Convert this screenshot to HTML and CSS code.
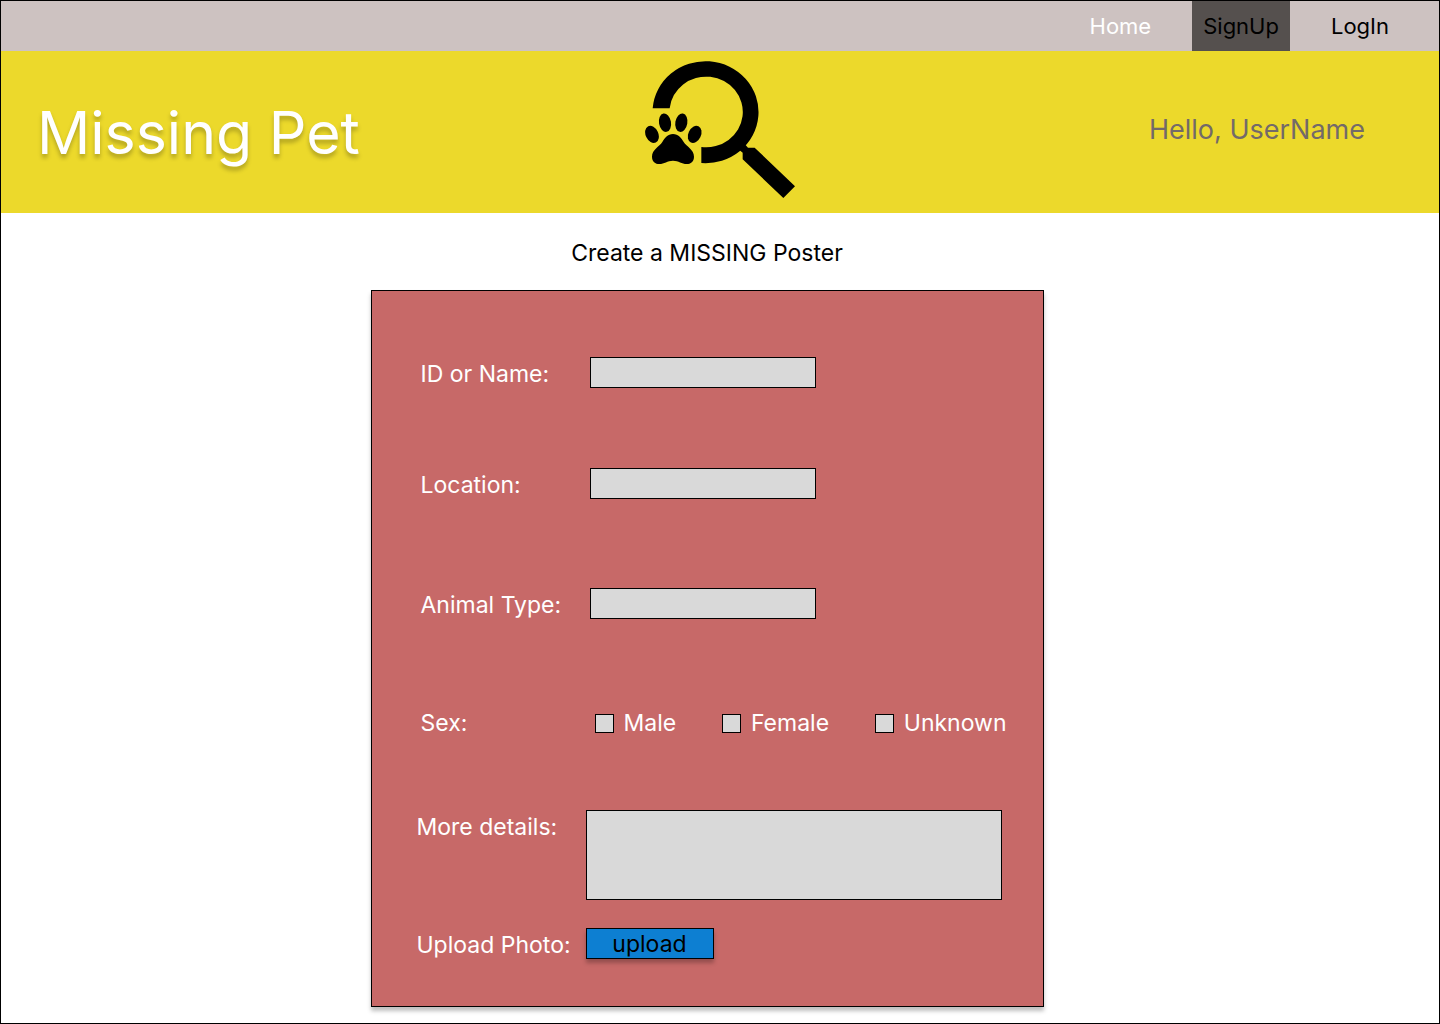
FILE: index.html
```html
<!DOCTYPE html>
<html lang="en">
<head>
<meta charset="utf-8">
<meta name="viewport" content="width=device-width, initial-scale=1">
<title>Missing Pet</title>
<link rel="stylesheet" href="styles.css">
</head>
<body>
<div class="page">
  <nav class="nav">
    <a class="nav-link nav-link-light" href="#">Home</a>
    <a class="nav-link nav-link-active" href="#">SignUp</a>
    <a class="nav-link" href="#">LogIn</a>
  </nav>
  <header class="banner">
    <h1 class="title">Missing Pet</h1>
    <svg class="logo" viewBox="48 33 450 411" aria-hidden="true">
      <path d="M71 175A159 153 0 1 1 217 339V291A110 106 0 1 0 122 175Z"/>
      <path d="M332 301L341 308V328L463 444L498 409L377 293H357L345 280Z"/>
      <ellipse cx="69" cy="253" rx="19" ry="27" transform="rotate(-25 69 253)"/>
      <ellipse cx="108" cy="218" rx="18" ry="28" transform="rotate(-10 108 218)"/>
      <ellipse cx="157" cy="218" rx="18" ry="28" transform="rotate(10 157 218)"/>
      <ellipse cx="197" cy="253" rx="19" ry="27" transform="rotate(25 197 253)"/>
      <path d="M132 252C148 252 157 264 164 276C173 290 195 299 195 320C195 335 185 342 173 342C158 342 149 332 132 332C115 332 106 342 91 342C79 342 69 335 69 320C69 299 91 290 100 276C107 264 116 252 132 252Z"/>
    </svg>
    <p class="greeting">Hello, UserName</p>
  </header>
  <main class="main">
    <h2 class="heading">Create a MISSING Poster</h2>
    <form class="card">
      <div class="fields">
        <label for="pet-name">ID or Name:</label>
        <input class="text-input" id="pet-name" type="text">
        <label for="location">Location:</label>
        <input class="text-input" id="location" type="text">
        <label for="animal">Animal Type:</label>
        <input class="text-input" id="animal" type="text">
        <span id="sex-label">Sex:</span>
        <div class="options" role="group" aria-labelledby="sex-label">
          <label class="option"><input class="tick" type="checkbox">Male</label>
          <label class="option"><input class="tick" type="checkbox">Female</label>
          <label class="option"><input class="tick" type="checkbox">Unknown</label>
        </div>
      </div>
      <div class="extras">
        <label for="details">More details:</label>
        <textarea class="details" id="details"></textarea>
        <label for="upload">Upload Photo:</label>
        <button class="upload" id="upload" type="button">upload</button>
      </div>
    </form>
  </main>
</div>
</body>
</html>
```
FILE: styles.css
```css
* {
  box-sizing: border-box;
}

body {
  margin: 0;
  background: #fff;
  color: #000;
  font-family: Inter, "Liberation Sans", sans-serif;
  font-size: 23px;
  line-height: 34px;
}

.page {
  min-height: 100vh;
  border: 1px solid #000;
}

.nav {
  display: flex;
  justify-content: flex-end;
  gap: 30px;
  height: 50px;
  padding-right: 39px;
  background: #cdc2c1;
}

.nav-link {
  display: flex;
  align-items: center;
  padding: 0 11px;
  color: #000;
  font-size: 22px;
  text-decoration: none;
}

.nav-link-light {
  color: #fff;
}

.nav-link-active {
  background: #55504e;
}

.banner {
  display: grid;
  grid-template-columns: 1fr auto 1fr;
  align-items: start;
  height: 162px;
  padding: 10px 36px 0;
  background: #ecd92b;
}

.title {
  margin: 36px 0 0;
  color: #fff;
  font-size: 59px;
  font-weight: 400;
  line-height: 72px;
  text-shadow: 0 4px 4px rgba(0, 0, 0, 0.25);
}

.logo {
  width: 150px;
  height: 137px;
}

.greeting {
  margin: 52px 38px 0 0;
  color: #736a69;
  font-size: 27px;
  text-align: right;
}

.main {
  display: flex;
  flex-direction: column;
  align-items: center;
  padding: 23px 26px 16px 0;
}

.heading {
  margin: 0 0 20px;
  font-size: 23px;
  font-weight: 400;
}

.card {
  width: 100%;
  max-width: 673px;
  padding: 66px 36px 44px 45px;
  border: 1px solid #000;
  background: #c76968;
  box-shadow: 0 4px 4px rgba(0, 0, 0, 0.25);
  color: #fff;
}

.fields,
.extras {
  display: grid;
  grid-template-columns: 169px 1fr;
  align-items: start;
}

.fields {
  grid-template-rows: 111px 120px 118px 104px;
  padding-left: 4px;
}

.extras {
  grid-template-rows: 118px auto;
}

.text-input,
.details {
  border: 1px solid #000;
  border-radius: 0;
  background: #d9d9d9;
  font: inherit;
}

.text-input {
  width: 226px;
  height: 31px;
  padding: 0 8px;
}

.options {
  display: flex;
  justify-content: space-between;
  padding-left: 5px;
}

.option {
  display: flex;
  align-items: center;
  gap: 10px;
}

.tick {
  width: 19px;
  height: 19px;
  margin: 0;
  border: 1px solid #000;
  background: #d9d9d9;
  appearance: none;
}

.tick:checked {
  background: #0d7fd2;
}

.details {
  width: 416px;
  height: 90px;
  padding: 8px;
  resize: none;
}

.upload {
  width: 128px;
  height: 31px;
  padding: 2px 0 0;
  border: 1px solid #000;
  background: #0d7fd2;
  box-shadow: 0 4px 4px rgba(0, 0, 0, 0.25);
  color: #000;
  font: inherit;
  line-height: 27px;
}
```
